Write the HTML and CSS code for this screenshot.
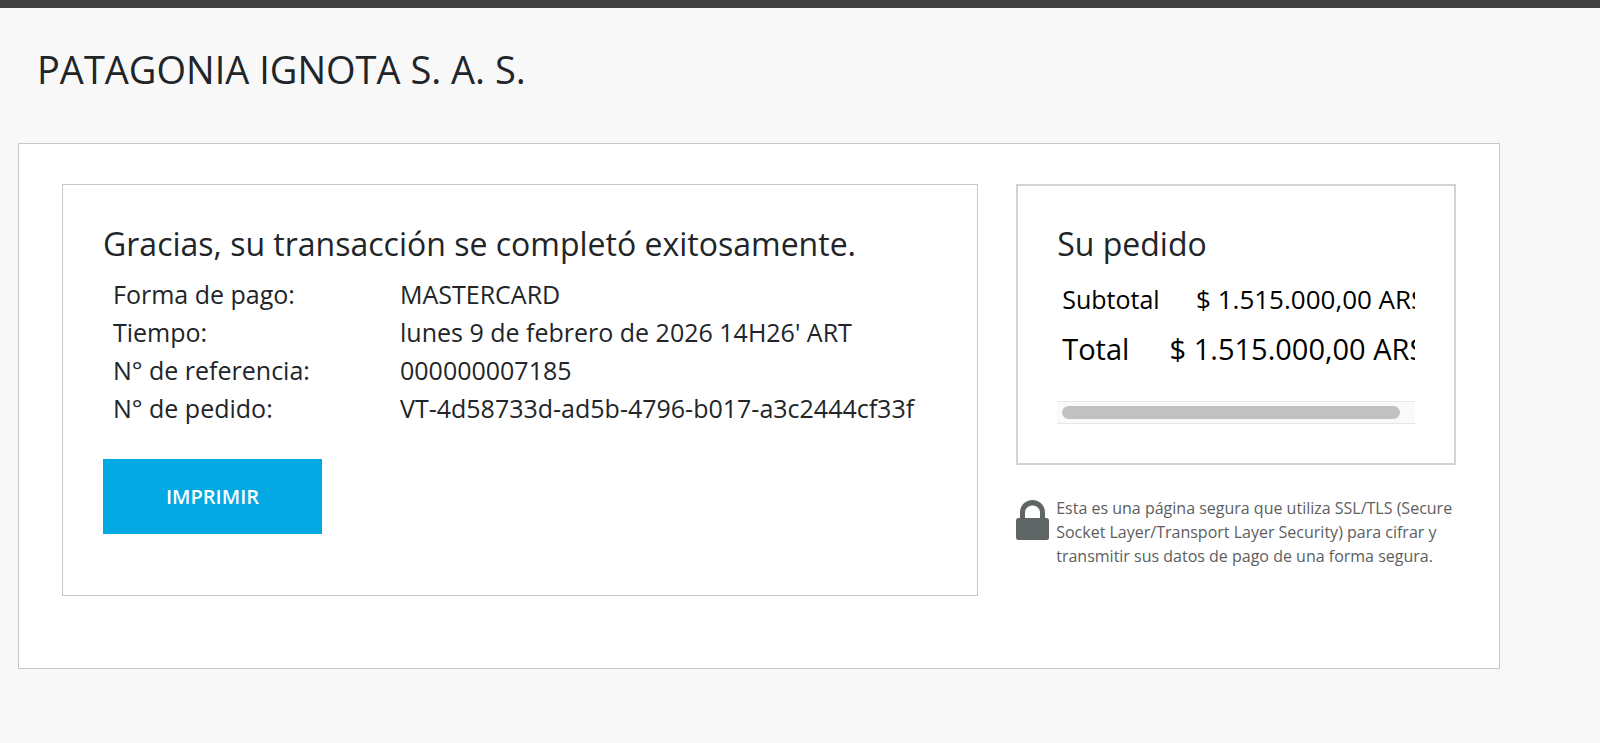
FILE: index.html
```html
<!DOCTYPE html>
<html lang="es">
<head>
<meta charset="utf-8">
<meta name="viewport" content="width=device-width, initial-scale=1">
<title>PATAGONIA IGNOTA S. A. S.</title>
<link rel="stylesheet" href="styles.css">
</head>
<body>
<header class="header">
  <h1 class="merchant">PATAGONIA IGNOTA S. A. S.</h1>
</header>
<main class="panel">
  <section class="receipt">
    <h2 class="title">Gracias, su transacción se completó exitosamente.</h2>
    <table class="details">
      <tbody>
        <tr><th scope="row">Forma de pago:</th><td>MASTERCARD</td></tr>
        <tr><th scope="row">Tiempo:</th><td>lunes 9 de febrero de 2026 14H26' ART</td></tr>
        <tr><th scope="row">N° de referencia:</th><td>000000007185</td></tr>
        <tr><th scope="row">N° de pedido:</th><td>VT-4d58733d-ad5b-4796-b017-a3c2444cf33f</td></tr>
      </tbody>
    </table>
    <button class="print" type="button">IMPRIMIR</button>
  </section>
  <aside class="side">
    <section class="order">
      <h2 class="title">Su pedido</h2>
      <div class="order-scroll">
        <table class="amounts">
          <tbody>
            <tr><th scope="row">Subtotal</th><td class="subtotal-amount">$ 1.515.000,00 ARS</td></tr>
            <tr class="total"><th scope="row">Total</th><td>$ 1.515.000,00 ARS</td></tr>
          </tbody>
        </table>
      </div>
      <div class="track" aria-hidden="true"><div class="thumb"></div></div>
    </section>
    <div class="secure">
      <svg class="lock" viewBox="0 0 33 40" aria-hidden="true">
        <path fill-rule="evenodd" d="M4 18V12.500C4 5.500 9.500 0 16.500 0S29 5.500 29 12.500V18H30.500Q33 18 33 20.500V37.500Q33 40 30.500 40H2.500Q0 40 0 37.500V20.500Q0 18 2.500 18ZM9 18H24V12.500C24 8.500 20.800 5.500 16.500 5.500S9 8.500 9 12.500Z"/>
      </svg>
      <p class="secure-text">Esta es una página segura que utiliza SSL/TLS (Secure Socket Layer/Transport Layer Security) para cifrar y transmitir sus datos de pago de una forma segura.</p>
    </div>
  </aside>
</main>
</body>
</html>
```

FILE: styles.css
```css
* {
  box-sizing: border-box;
}

body {
  margin: 0;
  border-top: 8px solid #404040;
  background: #f8f8f8;
  color: #212529;
  font-family: "Open Sans", "Noto Sans", sans-serif;
  font-size: 25px;
  line-height: 38px;
}

.header {
  padding: 35px 37px 48px;
}

.merchant {
  margin: 0;
  font-size: 38px;
  font-weight: 400;
  line-height: 52px;
}

.panel {
  display: grid;
  grid-template-columns: minmax(0, 25fr) minmax(0, 12fr);
  align-items: start;
  gap: 38px;
  margin: 0 100px 0 18px;
  padding: 40px 43px 72px;
  border: 1px solid #c8c8c8;
  background: #fff;
}

.receipt {
  padding: 39px 40px 61px;
  border: 1px solid #c8c8c8;
}

.title {
  margin: 0;
  font-size: 32px;
  font-weight: 400;
  line-height: 40px;
}

.details {
  width: 100%;
  margin: 11px 0 32px;
  border-collapse: collapse;
}

.details th,
.details td {
  padding: 0 10px;
  font-weight: 400;
  text-align: left;
  white-space: nowrap;
}

.details th {
  width: 287px;
}

.print {
  display: block;
  padding: 18px 63px;
  border: 0;
  background: #02a9e2;
  color: #fff;
  font-family: inherit;
  font-size: 20px;
  font-weight: 600;
  line-height: 39px;
}

.order {
  padding: 38px 39px 39px;
  border: 2px solid #d3d3d3;
}

.order-scroll {
  overflow: hidden;
  margin-bottom: 26px;
}

.amounts {
  width: 100%;
  margin-top: 11px;
  border-collapse: collapse;
  color: #000;
}

.amounts th,
.amounts td {
  padding: 5px;
  font-weight: 400;
  text-align: left;
  white-space: nowrap;
}

.amounts td {
  text-align: right;
}

.subtotal-amount {
  font-size: 26px;
}

.total {
  font-size: 29px;
  line-height: 42px;
}

.track {
  padding: 4px 5px;
  border: solid #e6e6e6;
  border-width: 1px 0;
  background: #fafafa;
}

.thumb {
  width: 97%;
  height: 13px;
  border-radius: 7px;
  background: #c1c1c1;
}

.secure {
  display: flex;
  align-items: flex-start;
  gap: 7px;
  margin-top: 31px;
  color: #5c5e60;
}

.lock {
  flex: none;
  width: 33px;
  margin-top: 4px;
  fill: #5f6464;
}

.secure-text {
  margin: 0;
  font-size: 16px;
  line-height: 24px;
}
```
